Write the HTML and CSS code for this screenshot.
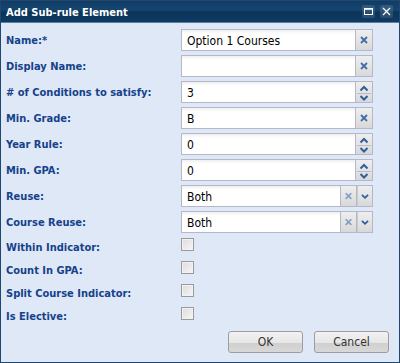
FILE: index.html
```html
<!DOCTYPE html>
<html lang="en">
<head>
  <meta charset="UTF-8">
  <title>Add Sub-rule Element</title>
  <link rel="stylesheet" href="styles.css">
</head>
<body>
  <div class="window">
    <!-- Header -->
    <div class="window-header">
      <span class="window-title">Add Sub-rule Element</span>
      <div class="tools">
        <span class="tool">
          <svg width="13" height="13" viewBox="0 0 13 13"><rect x="2.5" y="3.5" width="8" height="6" fill="none" stroke="#fff" stroke-width="1"/><line x1="2.5" y1="4" x2="10.5" y2="4" stroke="#fff" stroke-width="1.5"/></svg>
        </span>
        <span class="tool">
          <svg width="13" height="13" viewBox="0 0 13 13"><path d="M3 3l7 7M10 3l-7 7" stroke="#fff" stroke-width="1.3"/></svg>
        </span>
      </div>
    </div>

    <!-- Body -->
    <div class="window-body">
      <form class="form">
        <div class="row">
          <label>Name:*</label>
          <div class="field">
            <input type="text" value="Option 1 Courses">
            <span class="trigger"><svg width="16" height="20" viewBox="0 0 16 20"><path d="M5 6l6 6M11 6l-6 6" stroke="#3f6fa6" stroke-width="1.8"/></svg></span>
          </div>
        </div>
        <div class="row">
          <label>Display Name:</label>
          <div class="field">
            <input type="text" value="">
            <span class="trigger"><svg width="16" height="20" viewBox="0 0 16 20"><path d="M5 6l6 6M11 6l-6 6" stroke="#3f6fa6" stroke-width="1.8"/></svg></span>
          </div>
        </div>
        <div class="row">
          <label># of Conditions to satisfy:</label>
          <div class="field">
            <input type="text" value="3">
            <span class="trigger spin"><svg width="16" height="20" viewBox="0 0 16 20"><path d="M4.5 7.5l3.5-3.5 3.5 3.5" fill="none" stroke="#2f5f9a" stroke-width="2"/><line x1="1" y1="10.5" x2="15" y2="10.5" stroke="#b8bcc6"/><path d="M4.5 13l3.5 3.5 3.5-3.5" fill="none" stroke="#2f5f9a" stroke-width="2"/></svg></span>
          </div>
        </div>
        <div class="row">
          <label>Min. Grade:</label>
          <div class="field">
            <input type="text" value="B">
            <span class="trigger"><svg width="16" height="20" viewBox="0 0 16 20"><path d="M5 6l6 6M11 6l-6 6" stroke="#3f6fa6" stroke-width="1.8"/></svg></span>
          </div>
        </div>
        <div class="row">
          <label>Year Rule:</label>
          <div class="field">
            <input type="text" value="0">
            <span class="trigger spin"><svg width="16" height="20" viewBox="0 0 16 20"><path d="M4.5 7.5l3.5-3.5 3.5 3.5" fill="none" stroke="#2f5f9a" stroke-width="2"/><line x1="1" y1="10.5" x2="15" y2="10.5" stroke="#b8bcc6"/><path d="M4.5 13l3.5 3.5 3.5-3.5" fill="none" stroke="#2f5f9a" stroke-width="2"/></svg></span>
          </div>
        </div>
        <div class="row">
          <label>Min. GPA:</label>
          <div class="field">
            <input type="text" value="0">
            <span class="trigger spin"><svg width="16" height="20" viewBox="0 0 16 20"><path d="M4.5 7.5l3.5-3.5 3.5 3.5" fill="none" stroke="#2f5f9a" stroke-width="2"/><line x1="1" y1="10.5" x2="15" y2="10.5" stroke="#b8bcc6"/><path d="M4.5 13l3.5 3.5 3.5-3.5" fill="none" stroke="#2f5f9a" stroke-width="2"/></svg></span>
          </div>
        </div>
        <div class="row">
          <label>Reuse:</label>
          <div class="field">
            <input type="text" value="Both">
            <span class="trigger"><svg width="16" height="20" viewBox="0 0 16 20"><path d="M5 6l6 6M11 6l-6 6" stroke="#7f9fc6" stroke-width="1.8"/></svg></span>
            <span class="trigger"><svg width="16" height="20" viewBox="0 0 16 20"><path d="M4.5 7.5l3.5 3.5 3.5-3.5" fill="none" stroke="#2f5f9a" stroke-width="2"/></svg></span>
          </div>
        </div>
        <div class="row">
          <label>Course Reuse:</label>
          <div class="field">
            <input type="text" value="Both">
            <span class="trigger"><svg width="16" height="20" viewBox="0 0 16 20"><path d="M5 6l6 6M11 6l-6 6" stroke="#7f9fc6" stroke-width="1.8"/></svg></span>
            <span class="trigger"><svg width="16" height="20" viewBox="0 0 16 20"><path d="M4.5 7.5l3.5 3.5 3.5-3.5" fill="none" stroke="#2f5f9a" stroke-width="2"/></svg></span>
          </div>
        </div>

        <div class="row check-row">
          <label>Within Indicator:</label>
          <span class="checkbox"></span>
        </div>
        <div class="row check-row">
          <label>Count In GPA:</label>
          <span class="checkbox"></span>
        </div>
        <div class="row check-row">
          <label>Split Course Indicator:</label>
          <span class="checkbox"></span>
        </div>
        <div class="row check-row">
          <label>Is Elective:</label>
          <span class="checkbox"></span>
        </div>
      </form>

      <div class="buttons">
        <button type="button" class="btn">OK</button>
        <button type="button" class="btn">Cancel</button>
      </div>
    </div>
  </div>
</body>
</html>
```

FILE: styles.css
```css
/* General Styles */
body {
  margin: 0;
  font-family: "DejaVu Sans Condensed", "DejaVu Sans", sans-serif;
  font-stretch: condensed;
  background-color: #dfe8f6;
}

.window {
  width: 400px;
  height: 363px;
  box-sizing: border-box;
  border: 1px solid #1f4770; /* dark window frame */
  display: flex;
  flex-direction: column;
  background-color: #dfe8f6; /* ExtJS light blue */
}

/* Header */
.window-header {
  height: 21px;
  flex-shrink: 0;
  display: flex;
  align-items: center;
  justify-content: space-between;
  padding: 0 5px;
  background: linear-gradient(#103c64 0, #154670 40%, #0b3459 55%, #0f3b63 100%);
  border-bottom: 1px solid #5d7f9f;
}

.window-title {
  color: #ffffff;
  font-weight: bold;
  font-size: 11px;
  margin-top: 1px;
}

.tools {
  display: flex;
  gap: 5px;
  margin-right: 1px;
}

.tool {
  width: 13px;
  height: 13px;
  display: flex;
  border-radius: 2px;
  background-color: rgba(255, 255, 255, 0.12);
}

/* Body */
.window-body {
  flex: 1;
  display: flex;
  flex-direction: column;
  padding: 6px 10px 9px 5px;
}

.form {
  display: flex;
  flex-direction: column;
  gap: 4px;
}

.row {
  display: flex;
  align-items: center;
  height: 22px;
}

.row label {
  width: 175px;
  flex-shrink: 0;
  font-size: 11px;
  font-weight: bold;
  color: #15428b; /* label blue */
}

.field {
  display: flex;
  width: 192px;
  height: 22px;
}

.field input {
  flex: 1;
  min-width: 0;
  height: 22px;
  box-sizing: border-box;
  margin: 0;
  padding: 1px 5px 0 5px;
  border: 1px solid #b5b8c8;
  background: #ffffff linear-gradient(#f0f0f0, #ffffff 4px);
  font-family: inherit;
  font-stretch: condensed;
  font-size: 12px;
  color: #000000;
  outline: none;
}

.trigger {
  width: 17px;
  height: 22px;
  box-sizing: border-box;
  flex-shrink: 0;
  display: flex;
  justify-content: center;
  border: 1px solid #b5b8c8;
  border-left: none;
  background: linear-gradient(#eeeeee, #e2e2e2 60%, #d8d8d8);
}

.trigger svg {
  margin-top: 1px;
}

/* Combo fields carry two narrower triggers */
.field input + .trigger:not(:last-child),
.field .trigger + .trigger {
  width: 16px;
}

.field .trigger + .trigger {
  border-left: 1px solid #c8cad2;
}

/* Checkbox rows */
.check-row {
  height: 19px;
  align-items: flex-start;
}

.check-row label {
  line-height: 21px;
}

.checkbox {
  width: 13px;
  height: 13px;
  box-sizing: border-box;
  margin-top: 1px;
  border: 1px solid #9a9a9a;
  background: linear-gradient(135deg, #dcdcdc, #f6f6f6);
  box-shadow: inset 0 0 0 1px #f2f2f2;
}

/* Buttons */
.buttons {
  margin-top: auto;
  display: flex;
  justify-content: flex-end;
  gap: 11px;
}

.btn {
  width: 75px;
  height: 22px;
  padding: 0;
  border: 1px solid #9d9d9d;
  border-radius: 3px;
  background: linear-gradient(#f2f2f2 0, #e6e6e6 55%, #d0d0d0 56%, #d8d8d8 100%);
  font-family: inherit;
  font-stretch: condensed;
  font-size: 12px;
  color: #333333;
}
```
